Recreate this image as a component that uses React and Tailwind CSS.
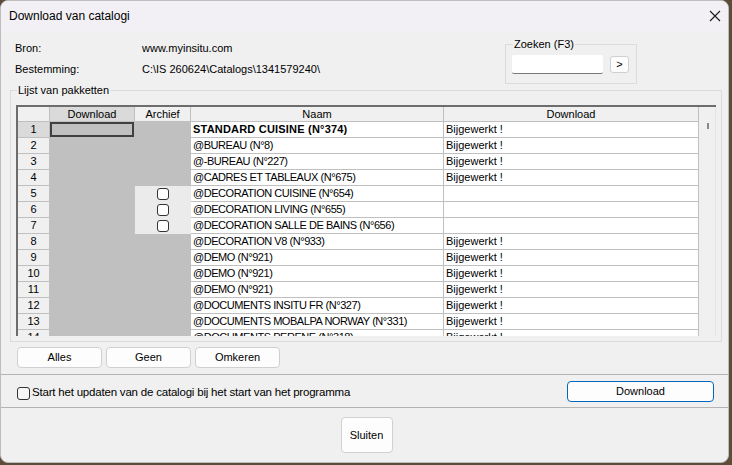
const rows = [
  { n: 1, name: "STANDARD CUISINE (N°374)", status: "Bijgewerkt !", bold: true },
  { n: 2, name: "@BUREAU (N°8)", status: "Bijgewerkt !" },
  { n: 3, name: "@-BUREAU (N°227)", status: "Bijgewerkt !" },
  { n: 4, name: "@CADRES ET TABLEAUX (N°675)", status: "Bijgewerkt !" },
  { n: 5, name: "@DECORATION CUISINE (N°654)", status: "", check: true },
  { n: 6, name: "@DECORATION LIVING (N°655)", status: "", check: true },
  { n: 7, name: "@DECORATION SALLE DE BAINS (N°656)", status: "", check: true },
  { n: 8, name: "@DECORATION V8 (N°933)", status: "Bijgewerkt !" },
  { n: 9, name: "@DEMO (N°921)", status: "Bijgewerkt !" },
  { n: 10, name: "@DEMO (N°921)", status: "Bijgewerkt !" },
  { n: 11, name: "@DEMO (N°921)", status: "Bijgewerkt !" },
  { n: 12, name: "@DOCUMENTS INSITU FR (N°327)", status: "Bijgewerkt !" },
  { n: 13, name: "@DOCUMENTS MOBALPA NORWAY (N°331)", status: "Bijgewerkt !" },
  { n: 14, name: "@DOCUMENTS PERENE (N°318)", status: "Bijgewerkt !" },
];

const cell = "h-4 border-r border-b border-[#c0c0c0] leading-[15px] whitespace-nowrap overflow-hidden";

function Grid() {
  return (
    <div className="flex h-[231px] overflow-hidden border-t-2 border-l-2 border-[#6d6d6d] bg-[#f0f0f0]">
      <div className="w-[681px] grid grid-cols-[32px_85px_56px_253px_255px] content-start">
        <div className={`${cell} h-[15px] bg-[#f0f0f0]`}></div>
        <div className={`${cell} h-[15px] bg-[#dadada] text-center`}>Download</div>
        <div className={`${cell} h-[15px] bg-[#f0f0f0] text-center`}>Archief</div>
        <div className={`${cell} h-[15px] bg-[#f0f0f0] text-center`}>Naam</div>
        <div className={`${cell} h-[15px] bg-[#f0f0f0] text-center`}>Download</div>
        {rows.map((r) => (
          <Row key={r.n} r={r} />
        ))}
      </div>
      <div className="w-[17px] relative bg-[#f0f0f0] border-r border-[#e3e3e3]">
        <div className="absolute left-[8px] top-[16px] w-[2px] h-[6px] bg-[#8a8a8a]"></div>
      </div>
    </div>
  );
}

function Row({ r }) {
  return (
    <>
      <div className={`${cell} text-center ${r.n === 1 ? "bg-[#dadada]" : "bg-[#f0f0f0]"}`}>{r.n}</div>
      <div className={`${cell} bg-[#c0c0c0] border-[#c0c0c0]`}>
        {r.n === 1 && <div className="h-[15px] w-full border-2 border-[#404040]"></div>}
      </div>
      <div className={`${cell} ${r.check ? "bg-[#ebebeb] border-[#ebebeb] flex items-center justify-center" : "bg-[#c0c0c0] border-[#c0c0c0]"}`}>
        {r.check && <div className="w-[12px] h-[12px] rounded-[3px] border border-[#333] bg-white"></div>}
      </div>
      <div className={`${cell} bg-white pl-[2px] ${r.bold ? "font-bold tracking-[0.2px]" : "tracking-[-0.45px]"}`}>{r.name}</div>
      <div className={`${cell} bg-white pl-[2px]`}>{r.status}</div>
    </>
  );
}

function Btn({ children, className = "" }) {
  return (
    <button className={`h-[21px] rounded-[4px] border border-[#d0d0d0] bg-[#fdfdfd] text-[11px] text-black ${className}`}>
      {children}
    </button>
  );
}

export default function App() {
  return (
    <div className="w-[732px] h-[465px] bg-[#5e4c3a] overflow-hidden" style={{ fontFamily: '"Liberation Sans", Arial, sans-serif' }}>
      <div className="w-[729px] h-[463px] rounded-[8px] overflow-hidden bg-[#f0f0f0] border border-[#bdbdbd] flex flex-col text-[11px] text-black">
        <div className="h-[30px] shrink-0 bg-[#f3f0f5] flex items-center pl-[8px] pr-[6px]">
          <span className="text-[12px]">Download van catalogi</span>
          <svg className="ml-auto mr-[1px]" width="12" height="12" viewBox="0 0 12 12">
            <path d="M1 1 L11 11 M11 1 L1 11" stroke="#1a1a1a" strokeWidth="1.1" fill="none" />
          </svg>
        </div>

        <div className="flex mt-[7px]">
          <div className="pl-[14px]">
            <div className="flex h-[21px] items-center">
              <span className="w-[127px]">Bron:</span>
              <span>www.myinsitu.com</span>
            </div>
            <div className="flex h-[21px] items-center">
              <span className="w-[127px]">Bestemming:</span>
              <span>C:\IS 260624\Catalogs\1341579240\</span>
            </div>
          </div>
          <fieldset className="ml-auto mr-[91px] w-[132px] h-[46px] border border-[#dcdcdc] px-[6px]">
            <legend className="ml-[1px] px-[1px] leading-[13px] text-[11px]">Zoeken (F3)</legend>
            <div className="flex items-center mt-[4px]">
              <div className="w-[91px] h-[19px] bg-white border-b border-[#7a7a7a] rounded-[2px]"></div>
              <button className="ml-[7px] w-[19px] h-[17px] rounded-[3px] border border-[#d0d0d0] bg-[#fdfdfd] text-[11px] leading-[15px]">&gt;</button>
            </div>
          </fieldset>
        </div>

        <fieldset className="mx-[9px] mt-0 border border-[#dcdcdc] px-[5px] pb-[5px]">
          <legend className="ml-[1px] px-[1px] leading-[13px] text-[11px]">Lijst van pakketten</legend>
          <div className="mt-[8px]">
            <Grid />
          </div>
        </fieldset>

        <div className="flex gap-[4px] pl-[16px] mt-[5px]">
          <Btn className="w-[85px]">Alles</Btn>
          <Btn className="w-[85px]">Geen</Btn>
          <Btn className="w-[85px]">Omkeren</Btn>
        </div>

        <div className="mt-[6px] h-px bg-[#b4b4b4]"></div>
        <div className="h-[32px] flex items-center pl-[16px] pr-[14px]">
          <div className="flex items-center mt-[4px]">
            <div className="w-[13px] h-[13px] rounded-[3px] border border-[#333] bg-[#f7f7f7]"></div>
            <span className="ml-[2px] text-[11.5px] tracking-[-0.2px]">Start het updaten van de catalogi bij het start van het programma</span>
          </div>
          <button className="ml-auto w-[147px] h-[21px] rounded-[4px] border border-[#0067c0] bg-[#fdfdfd] text-[11px]">Download</button>
        </div>
        <div className="h-px bg-[#b4b4b4]"></div>

        <div className="flex justify-center mt-[9px]">
          <button className="w-[52px] h-[36px] rounded-[4px] border border-[#d0d0d0] bg-[#fdfdfd] text-[11px] ml-[4px]">Sluiten</button>
        </div>
      </div>
    </div>
  );
}
